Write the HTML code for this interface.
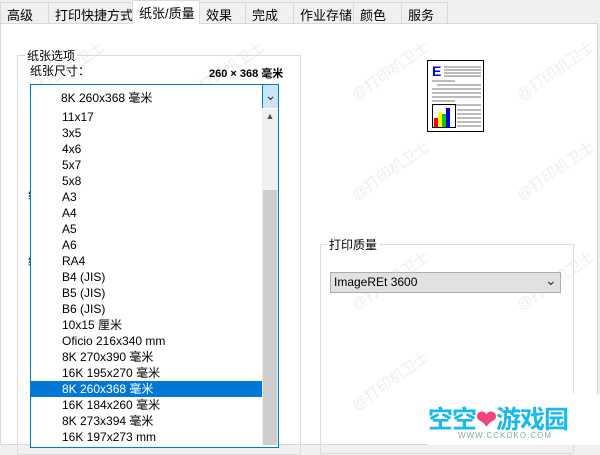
<!DOCTYPE html>
<html><head><meta charset="utf-8"><style>
*{margin:0;padding:0;box-sizing:border-box}
body{width:600px;height:445px;overflow:hidden;background:#f0f0f0;font-family:"Liberation Sans","Noto Sans CJK SC",sans-serif;font-size:12px;color:#000;position:relative}
.a{position:absolute}
.tab{position:absolute;top:2px;height:21px;border:1px solid #d9d9d9;border-bottom:none;background:#f0f0f0;padding:2px 0 0 6px;white-space:nowrap;font-size:13px}
.wm{position:absolute;color:#eeeeee;font-size:15px;transform:rotate(-35deg);white-space:nowrap}
.it{position:absolute;left:31px;width:231px;height:16px;line-height:16px;padding-left:31px;white-space:nowrap}
</style></head><body>
<div class="a" style="left:0;top:23px;width:598px;height:422px;background:#fff;border:1px solid #d9d9d9"></div>
<div class="tab" style="left:0;width:49px">高级</div>
<div class="tab" style="left:48px;width:85px">打印快捷方式</div>
<div class="tab" style="left:132px;top:0;height:24px;width:68px;background:#fff;padding-top:2px">纸张/质量</div>
<div class="tab" style="left:199px;width:47px">效果</div>
<div class="tab" style="left:245px;width:49px">完成</div>
<div class="tab" style="left:293px;width:61px">作业存储</div>
<div class="tab" style="left:353px;width:49px">颜色</div>
<div class="tab" style="left:401px;width:47px">服务</div>

<div class="wm" style="left:20px;top:60px">@打印机卫士</div>
<div class="wm" style="left:180px;top:60px">@打印机卫士</div>
<div class="wm" style="left:345px;top:60px">@打印机卫士</div>
<div class="wm" style="left:510px;top:60px">@打印机卫士</div>
<div class="wm" style="left:180px;top:160px">@打印机卫士</div>
<div class="wm" style="left:345px;top:160px">@打印机卫士</div>
<div class="wm" style="left:510px;top:160px">@打印机卫士</div>
<div class="wm" style="left:180px;top:270px">@打印机卫士</div>
<div class="wm" style="left:345px;top:270px">@打印机卫士</div>
<div class="wm" style="left:510px;top:270px">@打印机卫士</div>
<div class="wm" style="left:345px;top:370px">@打印机卫士</div>

<div class="a" style="left:17px;top:55px;width:284px;height:400px;border:1px solid #dcdcdc"></div>
<div class="a" style="left:25px;top:47px;background:#fff;padding:0 2px">纸张选项</div>
<div class="a" style="left:30px;top:62px">纸张尺寸：</div>
<div class="a" style="left:209px;top:65px;font-size:11px;font-weight:bold">260 × 368 毫米</div>
<div class="a" style="left:28px;top:186px">纸</div>
<div class="a" style="left:28px;top:252px">纸</div>

<div class="a" style="left:30px;top:84px;width:249px;height:25px;border:1px solid #0078d7;background:#fff"></div>
<div class="a" style="left:61px;top:89px;font-size:12px">8K 260x368 毫米</div>
<div class="a" style="left:262px;top:85px;width:16px;height:23px;background:#cce4f7;border-left:1px solid #0078d7;text-align:center;line-height:20px;color:#333;font-size:14px">⌄</div>

<div class="a" style="left:30px;top:108px;width:249px;height:340px;border:1px solid #0078d7;border-top:none;background:#fff"></div>
<div class="a" style="left:262px;top:109px;width:16px;height:336px;background:#f0f0f0"></div>
<div class="a" style="left:263px;top:190px;width:14px;height:255px;background:#cdcdcd"></div>
<div class="a" style="left:262px;top:111px;width:16px;text-align:center;font-size:9px;color:#555">▲</div>

<div class="it" style="top:109px">11x17</div>
<div class="it" style="top:125px">3x5</div>
<div class="it" style="top:141px">4x6</div>
<div class="it" style="top:157px">5x7</div>
<div class="it" style="top:173px">5x8</div>
<div class="it" style="top:189px">A3</div>
<div class="it" style="top:205px">A4</div>
<div class="it" style="top:221px">A5</div>
<div class="it" style="top:237px">A6</div>
<div class="it" style="top:253px">RA4</div>
<div class="it" style="top:269px">B4 (JIS)</div>
<div class="it" style="top:285px">B5 (JIS)</div>
<div class="it" style="top:301px">B6 (JIS)</div>
<div class="it" style="top:317px">10x15 厘米</div>
<div class="it" style="top:333px">Oficio 216x340 mm</div>
<div class="it" style="top:349px">8K 270x390 毫米</div>
<div class="it" style="top:365px">16K 195x270 毫米</div>
<div class="it" style="top:381px;background:#0078d7;color:#fff">8K 260x368 毫米</div>
<div class="it" style="top:397px">16K 184x260 毫米</div>
<div class="it" style="top:413px">8K 273x394 毫米</div>
<div class="it" style="top:429px">16K 197x273 mm</div>

<svg class="a" style="left:427px;top:60px" width="58" height="73" viewBox="0 0 58 73">
<rect x="0.5" y="0.5" width="56" height="71" fill="#fff" stroke="#000"/>
<text x="5" y="16" font-family="Liberation Sans" font-weight="bold" font-size="14" fill="#0000e0">E</text>
<g stroke="#777" stroke-width="1">
<line x1="17" y1="7" x2="54" y2="7"/><line x1="17" y1="10" x2="54" y2="10"/><line x1="17" y1="13" x2="54" y2="13"/><line x1="17" y1="16" x2="54" y2="16"/>
<line x1="5" y1="21" x2="28" y2="21"/><line x1="10" y1="25" x2="54" y2="25"/><line x1="5" y1="29" x2="54" y2="29"/><line x1="5" y1="33" x2="54" y2="33"/><line x1="5" y1="37" x2="54" y2="37"/><line x1="5" y1="41" x2="28" y2="41"/><line x1="10" y1="45" x2="54" y2="45"/>
<line x1="30" y1="50" x2="54" y2="50"/><line x1="30" y1="54" x2="54" y2="54"/><line x1="30" y1="58" x2="54" y2="58"/><line x1="30" y1="62" x2="54" y2="62"/><line x1="30" y1="66" x2="54" y2="66"/></g>
<rect x="5.5" y="44.5" width="23" height="23" fill="#fff" stroke="#000"/>
<rect x="7" y="58" width="4" height="9" fill="#f00"/><rect x="11" y="52" width="4" height="15" fill="#ff0"/><rect x="15" y="54" width="4" height="13" fill="#0c0"/><rect x="19" y="48" width="4" height="19" fill="#00e"/>
</svg>

<div class="a" style="left:320px;top:244px;width:254px;height:210px;border:1px solid #dcdcdc"></div>
<div class="a" style="left:327px;top:236px;background:#fff;padding:0 2px">打印质量</div>
<div class="a" style="left:330px;top:272px;width:231px;height:21px;border:1px solid #adadad;background:#e1e1e1;padding:2px 0 0 3px">ImageREt 3600</div>
<div class="a" style="left:545px;top:272px;color:#333;font-size:14px">⌄</div>

<div class="a" style="left:428px;top:394px;width:172px;height:51px;background:#fff"></div>
<div class="a" style="left:428px;top:400px;font-size:25px;font-weight:bold;color:#19b8ef;letter-spacing:-1px;white-space:nowrap">空空<span style="color:#f0457a">❤</span>游戏园</div>
<div class="a" style="left:458px;top:431px;font-size:8px;color:#8aa;letter-spacing:1px">WWW.CCKOKO.COM</div>
</body></html>
